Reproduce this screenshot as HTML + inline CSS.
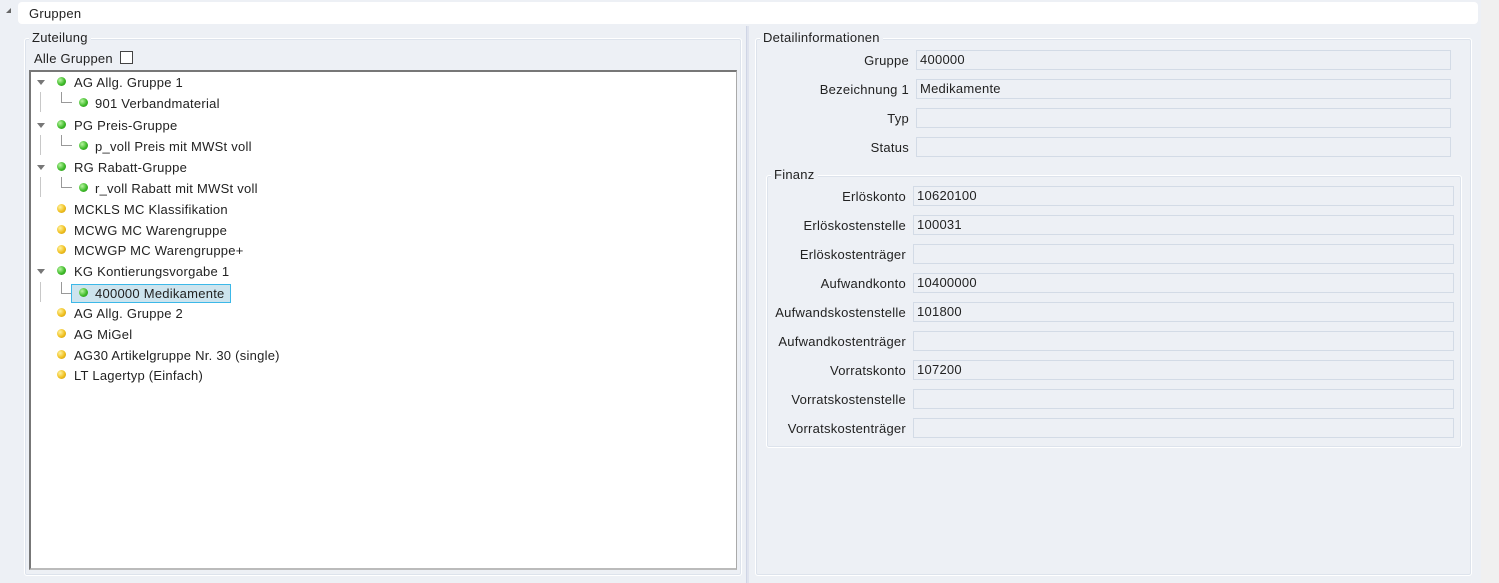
<!DOCTYPE html>
<html><head><meta charset="utf-8"><style>
*{box-sizing:border-box;margin:0;padding:0}
body{width:1499px;height:583px;background:#f0f0f0;font-family:"Liberation Sans",Tahoma,sans-serif;font-size:13px;color:#222;position:relative;overflow:hidden;letter-spacing:0.25px}
.a{position:absolute}
.fs{position:absolute;border:1px solid #fff;box-shadow:inset 0 0 0 1px #dde3ec;border-radius:3px}
.lg{position:absolute;background:#edf0f5;padding:0 3px;font-size:13px;line-height:14px}
.lbl{position:absolute;text-align:right;line-height:20px}
.in{position:absolute;height:20px;background:#edf0f5;border:1px solid #d3dbe6;line-height:18px;padding-left:3px}
.row{position:absolute;line-height:16px;white-space:nowrap}
.dot{position:absolute;width:9px;height:9px;border-radius:50%}
.g{background:radial-gradient(circle at 35% 35%,#b8f5a0,#3fbb2a 55%,#2a8a1a)}
.y{background:radial-gradient(circle at 35% 35%,#fff3a0,#f0c020 55%,#c09010)}
.tri{position:absolute;width:0;height:0;border-left:4px solid transparent;border-right:4px solid transparent;border-top:5px solid #777}
.vl{position:absolute;width:1px;background:#c8c8c8}
.hl{position:absolute;height:1px;background:#999}
</style></head><body>
<div class="a" style="left:0;top:0;width:1481px;height:583px;background:#edf0f5"></div>
<div class="a" style="left:6px;top:8px;width:0;height:0;border-left:5px solid transparent;border-bottom:5px solid #666"></div>
<div class="a" style="left:18px;top:2px;width:1460px;height:22px;background:#fff;border-radius:4px;padding-left:11px;line-height:23px">Gruppen</div>

<div class="fs" style="left:24px;top:38px;width:718px;height:538px"></div>
<div class="lg" style="left:29px;top:31px">Zuteilung</div>
<div class="a" style="left:34px;top:51px;line-height:16px">Alle Gruppen</div>
<div class="a" style="left:120px;top:51px;width:13px;height:13px;border:1px solid #444;background:#fff"></div>
<div class="a" style="left:29px;top:70px;width:708px;height:500px;background:#fff;border-top:2px solid #777;border-left:2px solid #777;border-right:1px solid #aaa;border-bottom:2px solid #bbb"></div>

<div class="a" style="left:746px;top:26px;width:3px;height:557px;background:#dfe3ee;border-left:1px solid #cfd5e5"></div>

<div class="fs" style="left:755px;top:38px;width:717px;height:538px"></div>
<div class="lg" style="left:760px;top:31px">Detailinformationen</div>

<div class="lbl" style="left:760px;top:51px;width:149px">Gruppe</div><div class="in" style="left:916px;top:50px;width:535px">400000</div>
<div class="lbl" style="left:760px;top:80px;width:149px">Bezeichnung 1</div><div class="in" style="left:916px;top:79px;width:535px">Medikamente</div>
<div class="lbl" style="left:760px;top:109px;width:149px">Typ</div><div class="in" style="left:916px;top:108px;width:535px"></div>
<div class="lbl" style="left:760px;top:138px;width:149px">Status</div><div class="in" style="left:916px;top:137px;width:535px"></div>

<div class="fs" style="left:766px;top:175px;width:696px;height:273px"></div>
<div class="lg" style="left:771px;top:168px">Finanz</div>
<div class="lbl" style="left:760px;top:187px;width:146px">Erlöskonto</div><div class="in" style="left:913px;top:186px;width:541px">10620100</div>
<div class="lbl" style="left:760px;top:216px;width:146px">Erlöskostenstelle</div><div class="in" style="left:913px;top:215px;width:541px">100031</div>
<div class="lbl" style="left:760px;top:245px;width:146px">Erlöskostenträger</div><div class="in" style="left:913px;top:244px;width:541px"></div>
<div class="lbl" style="left:760px;top:274px;width:146px">Aufwandkonto</div><div class="in" style="left:913px;top:273px;width:541px">10400000</div>
<div class="lbl" style="left:760px;top:303px;width:146px">Aufwandskostenstelle</div><div class="in" style="left:913px;top:302px;width:541px">101800</div>
<div class="lbl" style="left:760px;top:332px;width:146px">Aufwandkostenträger</div><div class="in" style="left:913px;top:331px;width:541px"></div>
<div class="lbl" style="left:760px;top:361px;width:146px">Vorratskonto</div><div class="in" style="left:913px;top:360px;width:541px">107200</div>
<div class="lbl" style="left:760px;top:390px;width:146px">Vorratskostenstelle</div><div class="in" style="left:913px;top:389px;width:541px"></div>
<div class="lbl" style="left:760px;top:419px;width:146px">Vorratskostenträger</div><div class="in" style="left:913px;top:418px;width:541px"></div>

<!-- tree -->
<div class="tri" style="left:37px;top:80px"></div><div class="dot g" style="left:57px;top:77px"></div><div class="row" style="left:74px;top:75px">AG Allg. Gruppe 1</div>
<div class="vl" style="left:40px;top:92px;height:20px"></div><div class="vl" style="left:61px;top:92px;height:10px;background:#999"></div><div class="hl" style="left:61px;top:102px;width:11px"></div>
<div class="dot g" style="left:79px;top:98px"></div><div class="row" style="left:95px;top:96px">901 Verbandmaterial</div>

<div class="tri" style="left:37px;top:123px"></div><div class="dot g" style="left:57px;top:120px"></div><div class="row" style="left:74px;top:118px">PG Preis-Gruppe</div>
<div class="vl" style="left:40px;top:135px;height:20px"></div><div class="vl" style="left:61px;top:135px;height:10px;background:#999"></div><div class="hl" style="left:61px;top:145px;width:11px"></div>
<div class="dot g" style="left:79px;top:141px"></div><div class="row" style="left:95px;top:139px">p_voll Preis mit MWSt voll</div>

<div class="tri" style="left:37px;top:165px"></div><div class="dot g" style="left:57px;top:162px"></div><div class="row" style="left:74px;top:160px">RG Rabatt-Gruppe</div>
<div class="vl" style="left:40px;top:177px;height:20px"></div><div class="vl" style="left:61px;top:177px;height:10px;background:#999"></div><div class="hl" style="left:61px;top:187px;width:11px"></div>
<div class="dot g" style="left:79px;top:183px"></div><div class="row" style="left:95px;top:181px">r_voll Rabatt mit MWSt voll</div>

<div class="dot y" style="left:57px;top:204px"></div><div class="row" style="left:74px;top:202px">MCKLS MC Klassifikation</div>
<div class="dot y" style="left:57px;top:225px"></div><div class="row" style="left:74px;top:223px">MCWG MC Warengruppe</div>
<div class="dot y" style="left:57px;top:245px"></div><div class="row" style="left:74px;top:243px">MCWGP MC Warengruppe+</div>

<div class="tri" style="left:37px;top:269px"></div><div class="dot g" style="left:57px;top:266px"></div><div class="row" style="left:74px;top:264px">KG Kontierungsvorgabe 1</div>
<div class="vl" style="left:40px;top:282px;height:20px"></div><div class="vl" style="left:61px;top:282px;height:11px;background:#999"></div><div class="hl" style="left:61px;top:293px;width:10px"></div>
<div class="a" style="left:71px;top:284px;width:160px;height:19px;background:#cde4ee;border:1px solid #3cb8e8"></div>
<div class="dot g" style="left:79px;top:288px"></div><div class="row" style="left:95px;top:286px">400000 Medikamente</div>

<div class="dot y" style="left:57px;top:308px"></div><div class="row" style="left:74px;top:306px">AG Allg. Gruppe 2</div>
<div class="dot y" style="left:57px;top:329px"></div><div class="row" style="left:74px;top:327px">AG MiGel</div>
<div class="dot y" style="left:57px;top:350px"></div><div class="row" style="left:74px;top:348px">AG30 Artikelgruppe Nr. 30 (single)</div>
<div class="dot y" style="left:57px;top:370px"></div><div class="row" style="left:74px;top:368px">LT Lagertyp (Einfach)</div>
</body></html>
